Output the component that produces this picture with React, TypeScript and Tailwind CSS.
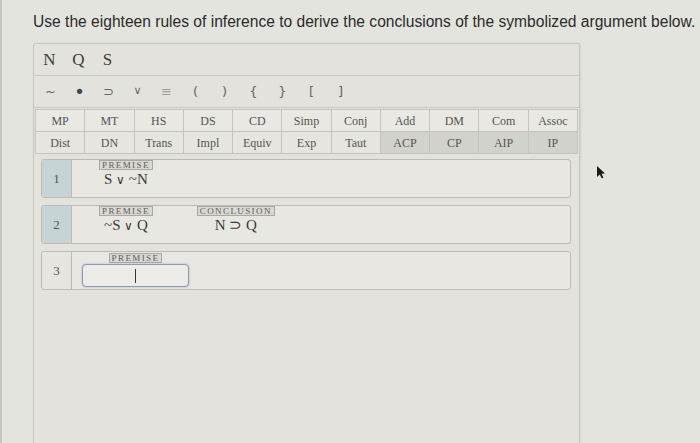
const variables = ["N", "Q", "S"];
const symbols = ["~", "•", "⊃", "∨", "≡", "(", ")", "{", "}", "[", "]"];

const rulesTop = ["MP", "MT", "HS", "DS", "CD", "Simp", "Conj", "Add", "DM", "Com", "Assoc"];
const rulesBottom = ["Dist", "DN", "Trans", "Impl", "Equiv", "Exp", "Taut", "ACP", "CP", "AIP", "IP"];
const darkRules = ["ACP", "CP", "AIP", "IP"];

const serif = "font-['Liberation_Serif','Times_New_Roman',serif]";

function Tag({ text }: { text: string }) {
  return (
    <span
      className={`${serif} block border border-[#a9a8a2] bg-[#d9d8d2] px-[2px] text-[9px] leading-[8px] tracking-[1.4px] text-[#5e5e5e] uppercase`}
    >
      {text}
    </span>
  );
}

function Line({
  num,
  active,
  children,
}: {
  num: number;
  active?: boolean;
  children: React.ReactNode;
}) {
  return (
    <div className="flex h-[39px] rounded-[3px] border border-[#bcbbb5] bg-[#e8e7e2]">
      <div
        className={`flex w-[30px] shrink-0 items-center justify-center rounded-l-[3px] border-r border-[#bcbbb5] ${serif} text-[13px] text-[#555] ${
          active ? "bg-[#c6d4d5]" : "bg-[#e6e5e0]"
        }`}
      >
        {num}
      </div>
      <div className="flex items-start">{children}</div>
    </div>
  );
}

// the wedge is drawn smaller than the letters in the original
function FormulaText({ value }: { value: string }) {
  return (
    <>
      {value.split("").map((ch, i) =>
        ch === "∨" ? (
          <span key={i} className="text-[12px]">
            {ch}
          </span>
        ) : (
          <span key={i}>{ch}</span>
        )
      )}
    </>
  );
}

function Formula({ label, value, className }: { label: string; value: string; className?: string }) {
  return (
    <div className={`flex flex-col items-center ${className ?? ""}`}>
      <Tag text={label} />
      <span className={`${serif} mt-[1px] text-[15px] leading-[16px] text-[#3a3a3a]`}>
        <FormulaText value={value} />
      </span>
    </div>
  );
}

export default function App() {
  return (
    <div className="relative h-[443px] w-[700px] overflow-hidden bg-[#e4e4df] pl-[33px] pt-[12px]">
      <div className="absolute left-0 top-0 h-full w-[2px] bg-[#c4c4bf]" />
      <p className="whitespace-nowrap font-['Liberation_Sans',Arial,sans-serif] text-[15.6px] leading-[20px] text-[#2b2b2b]">
        Use the eighteen rules of inference to derive the conclusions of the symbolized argument below.
      </p>

      <div className="mt-[11px] h-[410px] w-[547px] rounded-t-[3px] border border-[#c6c5bf] bg-[#e3e2dc] shadow-[1px_0_2px_rgba(0,0,0,0.08)]">
        <div className={`flex h-[31px] items-center pl-[1px] ${serif} text-[17px] text-[#3d3d3d]`}>
          {variables.map((v) => (
            <span key={v} className="w-[29px] text-center">
              {v}
            </span>
          ))}
        </div>
        <div className="h-[1px] bg-[#c9c8c2]" />
        <div className="flex h-[31px] items-center pl-[2px] font-['DejaVu_Sans',sans-serif] text-[13px] text-[#666]">
          {symbols.map((s) => (
            <span
              key={s}
              className={`w-[29px] text-center ${s === "≡" ? "text-[#9a9a96]" : ""} ${
                s === "•" ? "text-[18px] leading-[13px] text-[#444]" : ""
              } ${s === "∨" ? "text-[11px]" : ""}`}
            >
              {s}
            </span>
          ))}
        </div>
        <div className="h-[1px] bg-[#c9c8c2]" />

        <div className="mx-[1px] mt-[1px] grid grid-cols-11 border-l border-t border-[#c4c3bd]">
          {rulesTop.map((r) => (
            <div
              key={r}
              className={`flex h-[22px] items-center justify-center border-b border-r border-[#c4c3bd] bg-[#e9e8e3] ${serif} text-[12px] text-[#555]`}
            >
              {r}
            </div>
          ))}
          {rulesBottom.map((r) => (
            <div
              key={r}
              className={`flex h-[22px] items-center justify-center border-b border-r border-[#c4c3bd] ${serif} text-[12px] text-[#555] ${
                darkRules.includes(r) ? "bg-[#d2d2cd]" : "bg-[#e6e5e0]"
              }`}
            >
              {r}
            </div>
          ))}
        </div>

        <div className="ml-[7px] mr-[8px] mt-[5px] flex flex-col gap-[7px]">
          <Line num={1} active>
            <Formula label="Premise" value="S ∨ ~N" className="ml-[27px]" />
          </Line>
          <Line num={2} active>
            <Formula label="Premise" value="~S ∨ Q" className="ml-[27px]" />
            <Formula label="Conclusion" value="N ⊃ Q" className="ml-[44px]" />
          </Line>
          <Line num={3}>
            <div className="ml-[10px] mt-[1px] flex flex-col items-center">
              <Tag text="Premise" />
              <div className="mt-[1px] flex h-[23px] w-[107px] items-center justify-center rounded-[4px] border border-[#8d9bb0] bg-[#ecebe7] shadow-[0_0_2px_rgba(90,120,170,0.5)]">
                <span className="h-[14px] w-[1px] bg-[#333]" />
              </div>
            </div>
          </Line>
        </div>
      </div>

      <svg className="absolute left-[596px] top-[165px]" width="10" height="14" viewBox="0 0 10 14">
        <path d="M1 1 L1 12 L3.8 9.4 L5.8 13.4 L7.4 12.6 L5.5 8.8 L9 8.6 Z" fill="#1a1a1a" />
      </svg>
    </div>
  );
}
